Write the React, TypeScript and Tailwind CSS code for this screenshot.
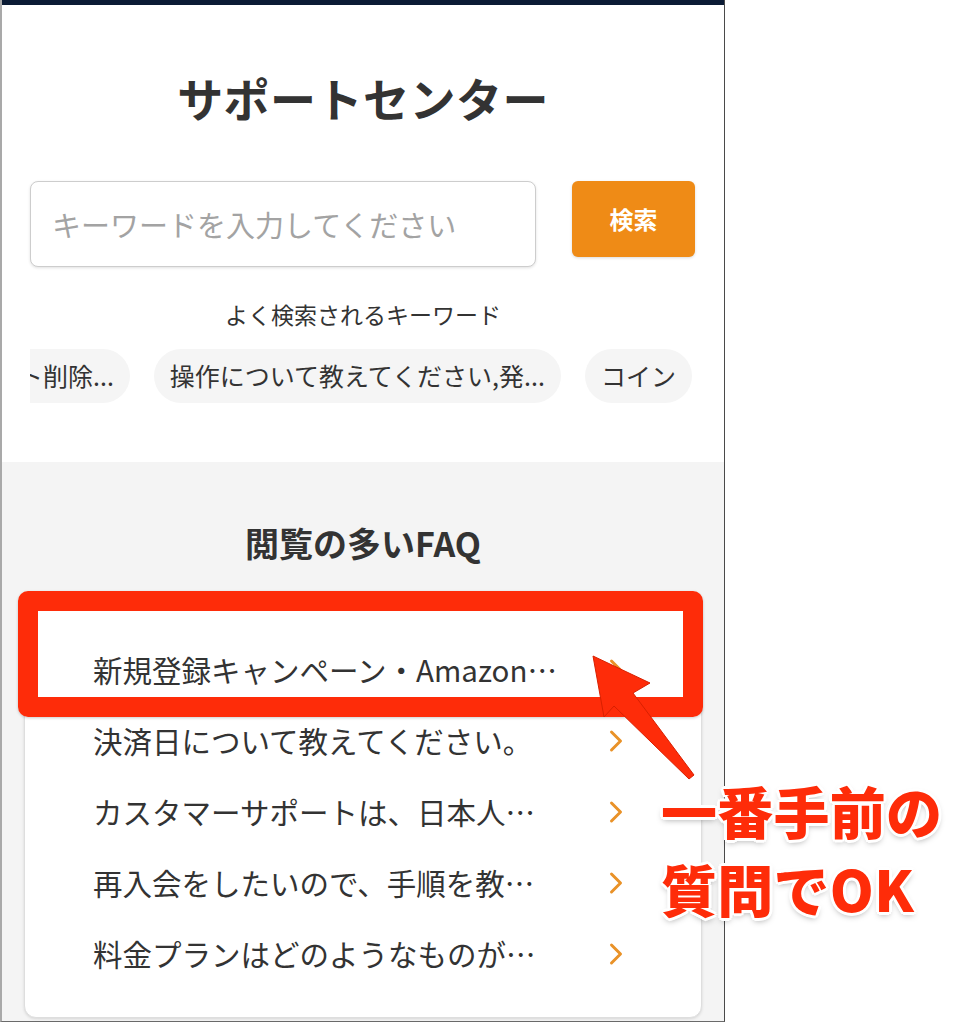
import React from "react";

const faqs = [
  "新規登録キャンペーン・Amazon…",
  "決済日について教えてください。",
  "カスタマーサポートは、日本人…",
  "再入会をしたいので、手順を教…",
  "料金プランはどのようなものが…",
];

function Chevron() {
  return (
    <svg width="14" height="24" viewBox="0 0 14 24" className="shrink-0">
      <polyline
        points="2.5,3 11.5,12 2.5,21"
        fill="none"
        stroke="#e99228"
        strokeWidth="3"
        strokeLinecap="round"
        strokeLinejoin="round"
      />
    </svg>
  );
}

export default function App() {
  return (
    <div
      lang="ja"
      className="relative w-[968px] h-[1024px] bg-white overflow-hidden font-['Noto_Sans_CJK_JP','Noto_Sans',sans-serif] text-[#333]"
    >
      <div className="w-[725px] h-[1022px] border-l-2 border-l-[#a9a9a9] border-r border-r-[#4a4a4a] border-b border-b-[#6a6a6a] flex flex-col">
        <div className="h-[5px] bg-[#0b1b35] shrink-0" />
        <div className="bg-white px-[28px] pt-[65px] pb-[59px] flex flex-col">
          <h1 className="text-center text-[46px] leading-[54px] font-bold tracking-[0.01em]">
            サポートセンター
          </h1>
          <div className="mt-[57px] flex items-start gap-[36px]">
            <input
              className="w-[506px] h-[86px] rounded-[8px] border-[1.5px] border-[#cdcdcd] bg-white pl-[21px] text-[29px] shadow-[0_1px_3px_rgba(0,0,0,0.12)] outline-none placeholder:text-[#a3a3a3]"
              placeholder="キーワードを入力してください"
            />
            <button className="w-[123px] h-[76px] rounded-[6px] bg-[#ef8b16] text-white text-[24px] font-bold shadow-[0_1px_3px_rgba(0,0,0,0.15)]">
              検索
            </button>
          </div>
          <div className="mt-[31px] text-center text-[23px] leading-[32px]">
            よく検索されるキーワード
          </div>
          <div className="mt-[19px] overflow-hidden">
            <div className="flex gap-[24px] -ml-[128px] w-max">
              {["アカウント削除...", "操作について教えてください,発...", "コイン"].map((k) => (
                <div
                  key={k}
                  className="h-[54px] rounded-full bg-[#f5f5f5] px-[16px] flex items-center text-[25px] whitespace-nowrap"
                >
                  {k}
                </div>
              ))}
            </div>
          </div>
        </div>
        <div className="flex-1 bg-[#f4f4f4] px-[22px] pt-[59px]">
          <h2 className="text-center text-[34px] leading-[44px] font-bold">
            閲覧の多いFAQ
          </h2>
          <div className="mt-[40px] bg-white rounded-[12px] border border-[#dedede] shadow-[0_1px_3px_rgba(0,0,0,0.12)] py-[28px]">
            {faqs.map((f) => (
              <div
                key={f}
                className="h-[71px] flex items-center pl-[68px] pr-[78px]"
              >
                <span className="flex-1 text-[29.5px] whitespace-nowrap overflow-hidden">
                  {f}
                </span>
                <Chevron />
              </div>
            ))}
          </div>
        </div>
      </div>

      {/* red highlight box */}
      <div className="absolute left-[18px] top-[591px] w-[685px] h-[126px] border-[20px] border-[#fe2c09] rounded-[10px] shadow-[0_1px_3px_rgba(0,0,0,0.2)]" />

      {/* arrow */}
      <svg
        className="absolute left-0 top-0"
        width="968"
        height="1024"
        viewBox="0 0 968 1024"
      >
        <polygon
          points="593,656 650,683 633,693 694,775 689,779 614,706 604,717"
          fill="#fe2c09"
          stroke="#d82000"
          strokeWidth="1"
          strokeLinejoin="round"
        />
      </svg>

      {/* annotation */}
      <div className="absolute left-[661px] top-[771px] text-[#fe2c09] text-[56px] leading-[78px] font-black tracking-[0.005em] [text-shadow:3px_0_0_#fff,-3px_0_0_#fff,0_3px_0_#fff,0_-3px_0_#fff,2px_2px_0_#fff,-2px_2px_0_#fff,2px_-2px_0_#fff,-2px_-2px_0_#fff,0_3px_6px_rgba(0,0,0,0.35)]">
        <div>一番手前の</div>
        <div>質問でOK</div>
      </div>
    </div>
  );
}
